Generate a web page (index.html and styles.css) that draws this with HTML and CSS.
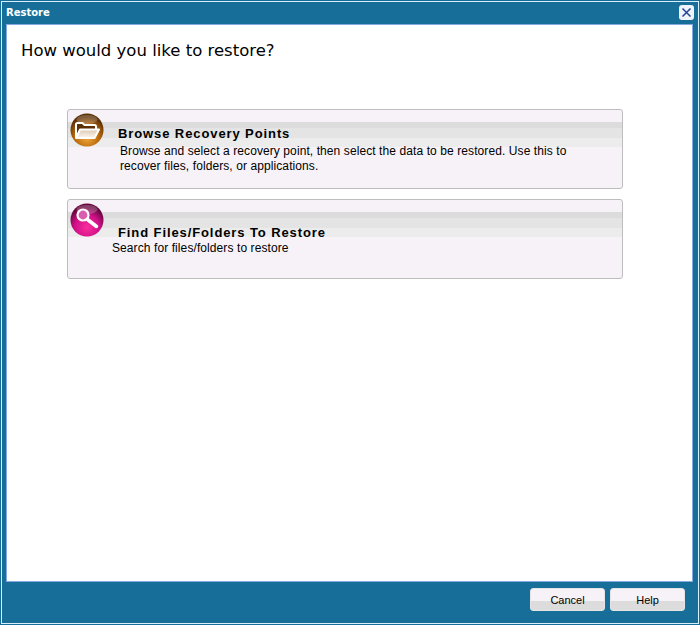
FILE: index.html
```html
<!DOCTYPE html>
<html lang="en">
<head>
<meta charset="utf-8">
<title>Restore</title>
<link rel="stylesheet" href="styles.css">
</head>
<body>
<div class="window">
  <header class="titlebar">
    <span class="title">Restore</span>
    <span class="close" aria-label="Close">
      <svg width="15" height="15" viewBox="0 0 15 15"><path d="M3.500 3.500l8 8M11.500 3.500l-8 8" stroke="#1f3f9a" stroke-width="1.500" fill="none"/></svg>
    </span>
  </header>
  <main class="content">
    <h1 class="heading">How would you like to restore?</h1>
    <section class="options">
      <div class="option option-browse">
        <svg class="badge" width="34" height="34" viewBox="0 0 34 34">
          <defs>
            <radialGradient id="brown" cx="50%" cy="72%" r="62%"><stop offset="0" stop-color="#f6ac3e"/><stop offset=".6" stop-color="#b8690c"/><stop offset="1" stop-color="#5a3006"/></radialGradient>
            <linearGradient id="front" x1="0" y1="0" x2="0" y2="1"><stop offset="0" stop-color="#d9c8b2"/><stop offset="1" stop-color="#fff8ee"/></linearGradient>
          </defs>
          <circle cx="17" cy="17" r="16.500" fill="url(#brown)"/>
          <ellipse cx="17" cy="6.500" rx="10.500" ry="4.500" fill="#fff" opacity=".22"/>
          <path d="M6 25V11.500q0-1.500 1.500-1.500h5l2 2h10q1.500 0 1.500 1.500V16" fill="#5a3006" stroke="#fff" stroke-width="2"/>
          <path d="M10 16.500H29L24.500 25H6z" fill="url(#front)" stroke="#fff" stroke-width="2" stroke-linejoin="round"/>
        </svg>
        <h2 class="option-title">Browse Recovery Points</h2>
        <p class="option-text">Browse and select a recovery point, then select the data to be restored. Use this to recover files, folders, or applications.</p>
      </div>
      <div class="option option-find">
        <svg class="badge" width="34" height="34" viewBox="0 0 34 34">
          <defs>
            <radialGradient id="pink" cx="50%" cy="72%" r="62%"><stop offset="0" stop-color="#fb2f9e"/><stop offset=".6" stop-color="#d01088"/><stop offset="1" stop-color="#66083f"/></radialGradient>
          </defs>
          <circle cx="17" cy="17" r="16.500" fill="url(#pink)"/>
          <ellipse cx="17" cy="6.500" rx="10.500" ry="4.500" fill="#fff" opacity=".22"/>
          <circle cx="13" cy="12" r="5.500" fill="#d95fae" stroke="#fff" stroke-width="2.200"/>
          <path d="M17.500 16.500l9 7" stroke="#fff" stroke-width="3.500" stroke-linecap="round"/>
        </svg>
        <h2 class="option-title">Find Files/Folders To Restore</h2>
        <p class="option-text">Search for files/folders to restore</p>
      </div>
    </section>
  </main>
  <footer class="footer">
    <button class="btn" type="button">Cancel</button>
    <button class="btn" type="button">Help</button>
  </footer>
</div>
</body>
</html>
```

FILE: styles.css
```css
* { box-sizing: border-box; }
html, body { margin: 0; padding: 0; }
body { width: 700px; height: 625px; overflow: hidden; background: #176f99; }

.window {
  width: 700px;
  height: 625px;
  background: #176f99;
  display: flex;
  flex-direction: column;
  border: 1px solid #176f99;
  outline: 1px solid #d8eef8;
  outline-offset: -2px;
  padding: 0 6px 0 5px;
}

.titlebar {
  height: 23px;
  flex: none;
  display: flex;
  align-items: center;
  justify-content: space-between;
}
.title {
  font: bold 10px "DejaVu Sans", sans-serif;
  color: #fff;
}
.close {
  width: 15px;
  height: 15px;
  background: #eef3fc;
  border-radius: 3px;
  display: flex;
  align-items: center;
  justify-content: center;
  margin-right: -1px;
}
.close svg { display: block; flex: none; }

.content {
  flex: 1;
  background: #fff;
  border: 1px solid #84a8e0;
  padding: 0 0 0 14px;
  min-height: 0;
}
.heading {
  margin: 15px 0 0;
  font: normal 16.500px/22px "DejaVu Sans", sans-serif;
  color: #000;
}
.options {
  margin: 47px 0 0 46px;
  width: 556px;
  display: flex;
  flex-direction: column;
  gap: 10px;
}
.option {
  position: relative;
  height: 80px;
  border: 1px solid #bdbdbd;
  border-radius: 3px;
  background: linear-gradient(to bottom,
    #f6f2f7 0, #f6f2f7 12px,
    #dcdcdc 12px, #dcdcdc 18px,
    #e4e4e4 18px, #e4e4e4 28px,
    #ececec 28px, #ececec 37px,
    #f6f2f7 37px, #f6f2f7 100%);
}
.badge { position: absolute; left: 2px; top: 3px; display: block; }

.option-title {
  margin: 0;
  font: bold 13px/16px "Liberation Sans", sans-serif;
  letter-spacing: .9px;
  color: #000;
}
.option-text {
  margin: 0;
  font: 12px/15px "Liberation Sans", sans-serif;
  letter-spacing: .09px;
  color: #000;
}
.option-browse .option-title { padding: 16px 0 0 50px; }
.option-browse .option-text { padding: 2px 40px 0 52px; }
.option-find .option-title { padding: 25px 0 0 50px; }
.option-find .option-text { padding: 0 40px 0 44px; }

.footer {
  height: 42px;
  flex: none;
  display: flex;
  justify-content: flex-end;
  align-items: flex-start;
  gap: 5px;
  padding: 6px 8px 0 0;
}
.btn {
  width: 75px;
  height: 23px;
  padding: 0;
  border: 1px solid #e4e4e4;
  border-radius: 3px;
  background: linear-gradient(to bottom, #f6f2f7 0, #f6f2f7 12px, #dcdcdc 12px, #dcdcdc 100%);
  font: 11px "Liberation Sans", sans-serif;
  color: #000;
}
```
